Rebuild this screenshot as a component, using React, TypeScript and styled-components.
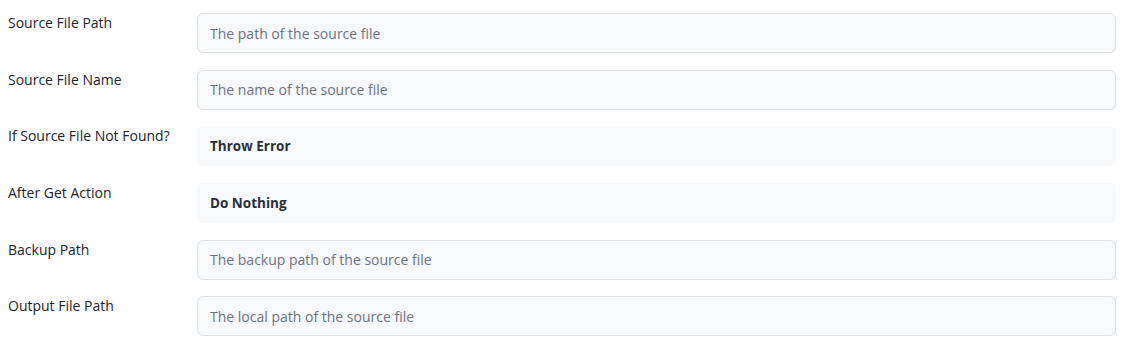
import React from 'react';
import styled, { createGlobalStyle } from 'styled-components';

const GlobalStyle = createGlobalStyle`
  body {
    margin: 0;
    background: #fff;
    font-family: 'Open Sans', 'Liberation Sans', sans-serif;
    color: #212529;
  }
`;

const Form = styled.div`
  display: flex;
  flex-direction: column;
  gap: 16.7px;
  padding: 13px 6px 0 8px;
`;

const Row = styled.div`
  display: grid;
  grid-template-columns: 189px 1fr;
  align-items: start;
`;

const Label = styled.label`
  font-size: 14px;
  line-height: 20px;
  color: #212529;
`;

const Field = styled.div<{ $select?: boolean }>`
  box-sizing: border-box;
  height: 40px;
  display: flex;
  align-items: center;
  padding: 0 12px;
  border-radius: 6px;
  background: #f8f9fb;
  border: 1px solid ${(p) => (p.$select ? 'transparent' : '#dcdfe4')};
  font-size: ${(p) => (p.$select ? '13.5px' : '14px')};
  color: ${(p) => (p.$select ? '#2a2f36' : '#6c737d')};
  font-weight: ${(p) => (p.$select ? 700 : 400)};
`;

const fields = [
  { label: 'Source File Path', value: 'The path of the source file' },
  { label: 'Source File Name', value: 'The name of the source file' },
  { label: 'If Source File Not Found?', value: 'Throw Error', select: true },
  { label: 'After Get Action', value: 'Do Nothing', select: true },
  { label: 'Backup Path', value: 'The backup path of the source file' },
  { label: 'Output File Path', value: 'The local path of the source file' },
];

const App = () => {
  return (
    <>
      <GlobalStyle />
      <Form>
        {fields.map((f) => (
          <Row key={f.label}>
            <Label>{f.label}</Label>
            <Field $select={f.select}>{f.value}</Field>
          </Row>
        ))}
      </Form>
    </>
  );
};

export default App;
